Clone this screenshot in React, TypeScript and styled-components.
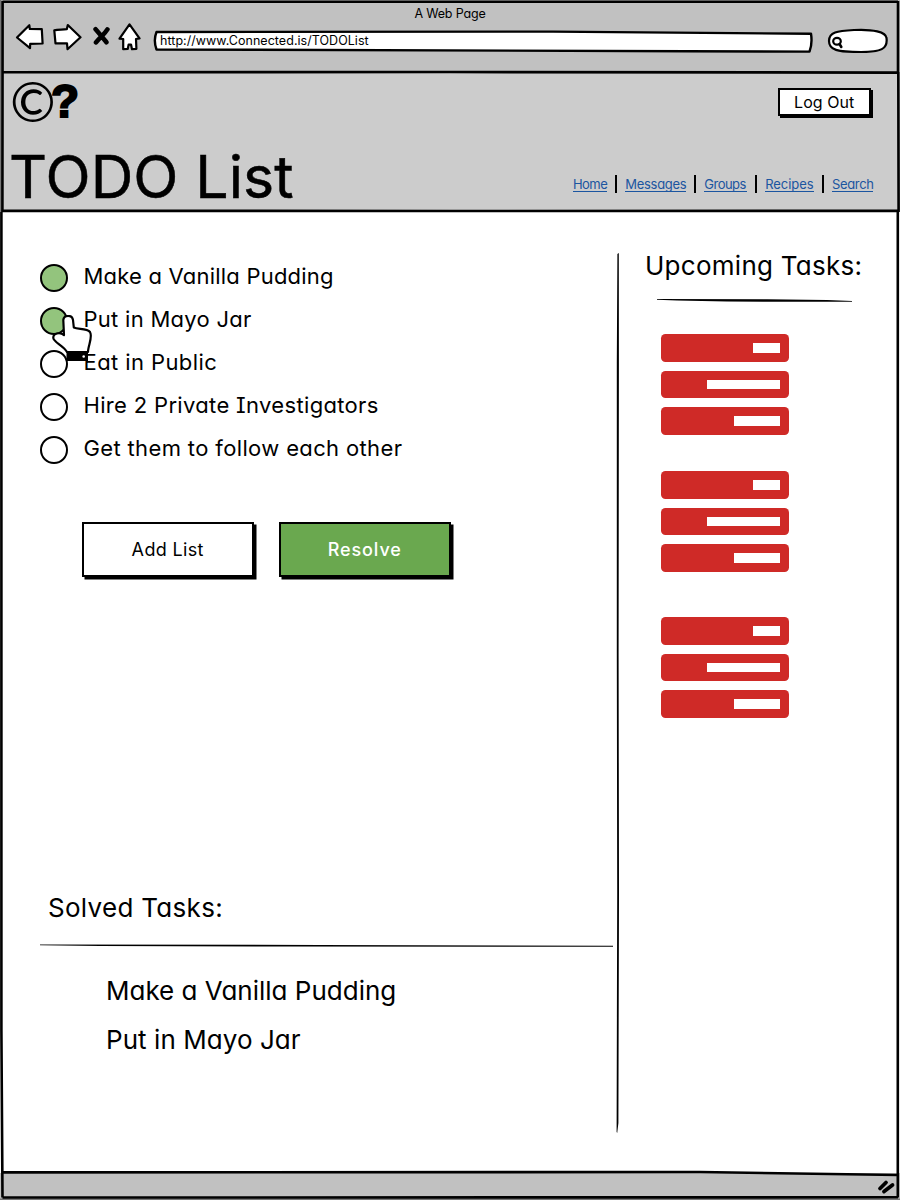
import React, { Fragment } from "react";
import styled, { createGlobalStyle } from "styled-components";

const GlobalStyle = createGlobalStyle`
  *, *::before, *::after { box-sizing: border-box; }
  body { margin: 0; background: #fff; }
  ul { list-style: none; margin: 0; padding: 0; }
  h1, h2 { margin: 0; font-weight: 400; }
  svg { display: block; flex: none; }
`;

const Window = styled.div`
  position: relative;
  display: flex;
  flex-direction: column;
  width: 900px;
  height: 1200px;
  overflow: hidden;
  background: #fff;
  color: #000;
  font-family: Inter, "Liberation Sans", sans-serif;
  font-feature-settings: "cv11", "cv08";
  white-space: nowrap;
`;

const Outline = styled.svg`
  position: absolute;
  inset: 0;
  pointer-events: none;
`;

const Chrome = styled.div`
  flex: none;
  height: 72px;
  padding: 4px 0 0 15px;
  background: #c1c1c1;
`;

const WindowTitle = styled.div`
  height: 19px;
  padding-right: 15px;
  font-size: 12.5px;
  line-height: 19px;
  letter-spacing: -0.16px;
  text-align: center;
`;

const Toolbar = styled.div`
  display: flex;
  align-items: flex-start;
  height: 40px;
`;

const ToolIcon = styled.svg<{ $gap: number }>`
  margin-right: ${(p) => p.$gap}px;
  fill: #fff;
  stroke: #000;
  stroke-width: 2.2;
  stroke-linejoin: round;
  stroke-linecap: round;
`;

const Address = styled.div`
  position: relative;
  width: 660px;
  height: 24px;
  margin: 6px 14px 0 0;
  padding-left: 7px;
  font-size: 12.5px;
  line-height: 23px;
  letter-spacing: 0.04px;
`;

const AddressShape = styled.svg`
  position: absolute;
  inset: 0;
  fill: #fff;
  stroke: #000;
  stroke-width: 2.4;
  stroke-linejoin: round;
`;

const AddressText = styled.span`
  position: relative;
`;

const Header = styled.header`
  flex: none;
  display: flex;
  justify-content: space-between;
  height: 139px;
  padding: 0 27px 0 12px;
  background: #ccc;
`;

const Brand = styled.div`
  display: flex;
  flex-direction: column;
`;

const Logo = styled.div`
  display: flex;
  height: 72px;
  margin-left: -2px;
  line-height: 58px;
`;

const LogoMark = styled.span`
  width: 41px;
  font-family: Lato, sans-serif;
  font-size: 55px;
  letter-spacing: -4px;
`;

const LogoQuestion = styled.span`
  font-family: "Liberation Sans", sans-serif;
  font-weight: 700;
  font-size: 46px;
  -webkit-text-stroke: 2px #000;
`;

const PageTitle = styled.h1`
  margin-left: -3px;
  font-size: 59px;
  line-height: 69px;
  letter-spacing: 0.1px;
  -webkit-text-stroke: 0.5px #000;
`;

const HeaderSide = styled.div`
  display: flex;
  flex-direction: column;
  align-items: flex-end;
  padding-top: 15.5px;
`;

const Button = styled.button<{ $small?: boolean; $primary?: boolean }>`
  width: ${(p) => (p.$small ? 93.5 : 171.5)}px;
  height: ${(p) => (p.$small ? 28.5 : 55)}px;
  margin-right: ${(p) => (p.$small ? 2 : 0)}px;
  padding: 0;
  border: 2px solid #000;
  background: ${(p) => (p.$primary ? "#6aa84f" : "#fff")};
  box-shadow: ${(p) => (p.$small ? "2px 2px 0 #000" : "2.5px 2.5px 0 #000")};
  color: ${(p) => (p.$primary ? "#fff" : "#000")};
  font: ${(p) => (p.$primary ? 500 : 400)} ${(p) => (p.$small ? 16 : 18)}px Inter, sans-serif;
  font-feature-settings: inherit;
  letter-spacing: ${(p) => (p.$primary ? 0.9 : p.$small ? 0.06 : 0.35)}px;
`;

const Nav = styled.nav`
  display: flex;
  align-items: center;
  height: 18px;
  margin-top: 59px;
`;

const NavLink = styled.a<{ $width: number; $spacing: number }>`
  width: ${(p) => p.$width}px;
  height: 15px;
  border-bottom: 1px solid #1b55a0;
  color: #1b55a0;
  font-size: 13px;
  line-height: 15px;
  letter-spacing: ${(p) => p.$spacing}px;
`;

const NavSeparator = styled.span`
  width: 2px;
  height: 18px;
  margin: 0 8.2px;
  background: #000;
`;

const Main = styled.main`
  flex: none;
  display: flex;
  height: 962px;
`;

const Content = styled.section`
  width: 615px;
  padding: 43px 0 0 40px;
`;

const TaskRow = styled.li`
  display: flex;
  align-items: center;
  height: 43.2px;
`;

const Check = styled.span<{ $done?: boolean }>`
  width: 28px;
  height: 28px;
  margin: 4px 15.5px 0 0;
  border: 2px solid #000;
  border-radius: 50%;
  background: ${(p) => (p.$done ? "#93c47d" : "#fff")};
`;

const TaskName = styled.span<{ $spacing: number }>`
  font-size: 22px;
  line-height: 28px;
  letter-spacing: ${(p) => p.$spacing}px;
`;

const TaskList = styled.ul`
  position: relative;
  height: 220px;
`;

const Cursor = styled.svg`
  position: absolute;
  left: 11px;
  top: 61px;
`;

const Actions = styled.div`
  display: flex;
  gap: 25.5px;
  margin: 47.5px 0 0 42px;
`;

const SolvedTitle = styled.h2`
  margin: 313px 0 0 8px;
  font-size: 26px;
  line-height: 36px;
  letter-spacing: 0.3px;
`;

const SolvedRule = styled.svg`
  margin-top: 18.5px;
`;

const SolvedList = styled.ul`
  padding: 18px 0 0 66px;
`;

const SolvedItem = styled.li<{ $spacing: number }>`
  height: 49px;
  font-size: 26px;
  line-height: 49px;
  letter-spacing: ${(p) => p.$spacing}px;
`;

const Divider = styled.svg`
  margin-top: 42px;
`;

const Sidebar = styled.aside`
  padding: 37px 0 0 23px;
`;

const SidebarTitle = styled.h2`
  margin-left: 1px;
  font-size: 26px;
  line-height: 36px;
  letter-spacing: 0.27px;
`;

const SidebarRule = styled.svg`
  margin: 15px 0 0 13px;
`;

const TaskGroup = styled.ul<{ $gap: number }>`
  display: flex;
  flex-direction: column;
  gap: 9px;
  margin: ${(p) => p.$gap}px 0 0 17px;
`;

const TaskBar = styled.li`
  display: flex;
  justify-content: flex-end;
  width: 128px;
  height: 27.5px;
  padding: 9px 9px 0 0;
  border-radius: 4.5px;
  background: #cf2a27;
`;

const TaskBarValue = styled.span<{ $width: number }>`
  width: ${(p) => p.$width}px;
  height: 9.5px;
  background: #fff;
`;

const StatusBar = styled.footer`
  flex: 1;
  background: #c1c1c1;
`;

const links = [
  { name: "Home", width: 34, spacing: -0.5 },
  { name: "Messages", width: 60.6, spacing: -0.3 },
  { name: "Groups", width: 42.5, spacing: -0.5 },
  { name: "Recipes", width: 48.5, spacing: -0.05 },
  { name: "Search", width: 41, spacing: -0.35 },
];

const tasks = [
  { name: "Make a Vanilla Pudding", done: true, spacing: 0.21 },
  { name: "Put in Mayo Jar", done: true, spacing: 0.28 },
  { name: "Eat in Public", done: false, spacing: 0.41 },
  { name: "Hire 2 Private Investigators", done: false, spacing: 0.33 },
  { name: "Get them to follow each other", done: false, spacing: 0.36 },
];

const solved = [
  { name: "Make a Vanilla Pudding", spacing: 0 },
  { name: "Put in Mayo Jar", spacing: 0.06 },
];

const groups = [
  { gap: 31, bars: [27.5, 73.5, 46] },
  { gap: 36.5, bars: [27.5, 73.5, 46] },
  { gap: 45.5, bars: [27.5, 73.5, 46] },
];

export default function App() {
  return (
    <Window>
      <GlobalStyle />
      <Chrome>
        <WindowTitle>A Web Page</WindowTitle>
        <Toolbar>
          <ToolIcon $gap={8} width="30" height="28" viewBox="0 0 30 28">
            <path d="M2 14.5 L14.3 2.2 L14.8 6 L26.8 6.2 L27.6 20.5 L15.2 20.8 L15 25.2 Z" />
          </ToolIcon>
          <ToolIcon $gap={10} width="29" height="28" viewBox="0 0 29 28">
            <path d="M1.3 7.4 C5 6 9 7 13.8 6.2 L14.8 2 L27.5 14.2 L14.5 26.2 L14 20.3 L2.5 20.3 Z" />
          </ToolIcon>
          <ToolIcon $gap={8} width="18" height="28" viewBox="0 0 18 28">
            <path
              d="M3.6 6.2 C7 10 11 15 14.4 19.2 M15.4 6.4 C12 12 8 14 4 19.4"
              strokeWidth="4.6"
              fill="none"
            />
          </ToolIcon>
          <ToolIcon $gap={12} width="23" height="28" viewBox="0 0 23 28">
            <path d="M11.5 1.4 L21.5 15.4 L18 16 L18.4 25.8 L14 26.2 L13 21.6 L10.6 21.6 L9.8 25.8 L5.2 26.2 L5.2 16 L1.5 15.6 Z" />
          </ToolIcon>
          <Address>
            <AddressShape width="660" height="24" viewBox="0 0 660 24">
              <path d="M3.5 3 C120 3 250 2 400 2.6 L658 4.8 C659 11 659 16 656.5 22.6 C450 21.5 260 23 3.5 20.5 C1.5 15 1.5 8 3.5 3 Z" />
            </AddressShape>
            <AddressText>http://www.Connected.is/TODOList</AddressText>
          </Address>
          <ToolIcon $gap={0} width="62" height="30" viewBox="0 0 62 30">
            <path d="M2 18 C2 9 10 8 27 7 C46 6 59 9 59.5 15 C61 26 54 29 34 29 C10 29 2 27 2 18 Z" />
            <ellipse cx="10" cy="18.2" rx="3.8" ry="3.4" />
            <path d="M12.5 21 L14.3 24" strokeWidth="2.6" />
          </ToolIcon>
        </Toolbar>
      </Chrome>
      <Header>
        <Brand>
          <Logo>
            <LogoMark>©</LogoMark>
            <LogoQuestion>?</LogoQuestion>
          </Logo>
          <PageTitle>TODO List</PageTitle>
        </Brand>
        <HeaderSide>
          <Button $small>Log Out</Button>
          <Nav>
            {links.map((l, i) => (
              <Fragment key={l.name}>
                {i > 0 && <NavSeparator />}
                <NavLink $width={l.width} $spacing={l.spacing}>
                  {l.name}
                </NavLink>
              </Fragment>
            ))}
          </Nav>
        </HeaderSide>
      </Header>
      <Main>
        <Content>
          <TaskList>
            {tasks.map((t) => (
              <TaskRow key={t.name}>
                <Check $done={t.done} />
                <TaskName $spacing={t.spacing}>{t.name}</TaskName>
              </TaskRow>
            ))}
            <Cursor width="44" height="50" viewBox="0 0 44 50">
              <path
                d="M16 37 C13 31 2.5 27 2.3 23 C2 18 9 17 13 20 L12.3 5 C13 -0.5 21 -0.5 22 5 L22.8 12.5 C27 14.5 36 13 39 17 C42 22 37 31 37 37 Z"
                fill="#fff"
                stroke="#000"
                strokeWidth="2.2"
                strokeLinejoin="round"
              />
              <path d="M15.5 36.5 H37 V46 H15.5 Z" />
              <circle cx="32.7" cy="41.5" r="1.3" fill="#fff" />
            </Cursor>
          </TaskList>
          <Actions>
            <Button>Add List</Button>
            <Button $primary>Resolve</Button>
          </Actions>
          <SolvedTitle>Solved Tasks:</SolvedTitle>
          <SolvedRule width="573" height="4" viewBox="0 0 573 4">
            <path d="M0 0.5 L280 0.9 L573 1.8 L573 2.8 L250 2.6 L60 2 L0 1.2 Z" />
          </SolvedRule>
          <SolvedList>
            {solved.map((s) => (
              <SolvedItem key={s.name} $spacing={s.spacing}>
                {s.name}
              </SolvedItem>
            ))}
          </SolvedList>
        </Content>
        <Divider width="6" height="880" viewBox="0 0 6 880">
          <path d="M2.4 1 L3.8 0 L3.9 110 L3.6 400 L4 640 L3.4 870 L2.2 880 L1.6 879 L2.2 640 L1.8 400 L1.8 110 Z" />
        </Divider>
        <Sidebar>
          <SidebarTitle>Upcoming Tasks:</SidebarTitle>
          <SidebarRule width="196" height="4" viewBox="0 0 196 4">
            <path d="M0 0 L110 0.2 L170 1 L195 2 L195 2.8 L70 2.6 L20 1.6 L0 0.8 Z" />
          </SidebarRule>
          {groups.map((g, i) => (
            <TaskGroup key={i} $gap={g.gap}>
              {g.bars.map((w) => (
                <TaskBar key={w}>
                  <TaskBarValue $width={w} />
                </TaskBar>
              ))}
            </TaskGroup>
          ))}
        </Sidebar>
      </Main>
      <StatusBar />
      <Outline width="900" height="1200" viewBox="0 0 900 1200">
        <path d="M0 0 H1.5 V212 H0 Z M0 1198.5 H900 V1200 H0 Z" fill="#777" />
        <path
          d="M2.5 1.7 L898 1.7 M2.6 1 L2.4 212 M1.4 212 L1.4 1030 L2.5 1197.5 M898 1 L898 72 M898.3 72 L898.6 212 M897.8 212 L897.8 1197.5 M2 72.3 L450 72 L899 72.6 M2 210.7 L450 211 L899 210.8 M2 1172.4 L700 1172 L898 1175 M2.5 1197.5 L898 1197.3"
          fill="none"
          stroke="#000"
          strokeWidth="2.6"
        />
        <path d="M880 1188.5 L886 1182.5 M884 1191.5 L892.5 1185" stroke="#000" strokeWidth="3.8" strokeLinecap="round" />
      </Outline>
    </Window>
  );
}
